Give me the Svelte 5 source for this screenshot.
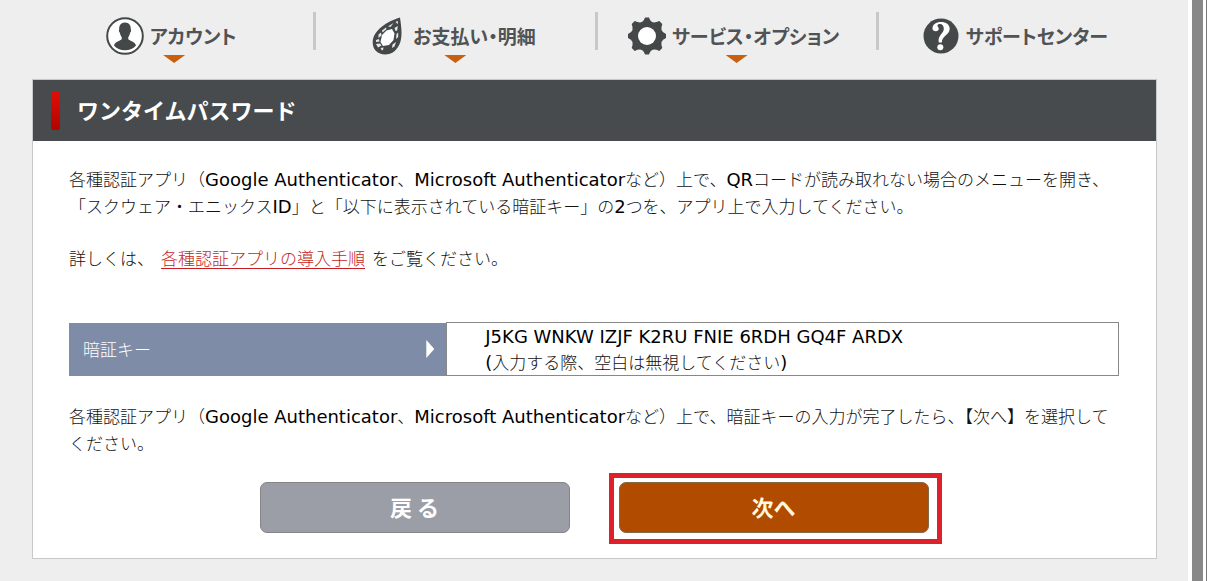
<script>
  const authApps = ['Google Authenticator', 'Microsoft Authenticator'];
  const passKey = 'J5KG WNKW IZJF K2RU FNIE 6RDH GQ4F ARDX';
  const menu = [
    { icon: 'account', label: 'アカウント', more: true },
    { icon: 'crystal', label: 'お支払い・明細', more: true },
    { icon: 'gear', label: 'サービス・オプション', more: true },
    { icon: 'help', label: 'サポートセンター', more: false }
  ];
</script>

<div class="window">
  <div class="page">
    <nav>
      {#each menu as item}
        <a href="#{item.icon}">
          <span class="entry">
            <svg class="icon" viewBox="0 0 38 38" aria-hidden="true">
              {#if item.icon === 'account'}
                <circle cx="19" cy="19" r="17.8" fill="#fff" stroke="#454849" stroke-width="2" />
                <path d="M19 5.5c4.2 0 6 3 5.800 7c.5.4.4 2.600-.7 3.300c-.3 2-1 3.300-1.800 4.100v2.300c1.200 1.700 6.900 2.100 7.700 6.300c-2.300 3.200-6.400 4.800-11 4.800s-8.700-1.600-11-4.800c.8-4.200 6.500-4.600 7.700-6.300v-2.300c-.8-.8-1.500-2.100-1.800-4.100c-1.100-.7-1.200-2.900-.7-3.300c-.2-4 1.600-7 5.800-7z" fill="#454849" />
              {:else if item.icon === 'crystal'}
                <path d="M31 .5c1.200 8.500 2.500 17 .5 24c-2.500 8.500-8.500 13-15.500 13S3.200 32.500 3.700 24.500C4.500 13 18 4.500 31 .5z" fill="#454849" />
                <path d="M17.500 13.500l5.500-1.500l2.500 4.500l-1 6.500l-4.500 5l-6 1l-2.500-4l1.500-7z" fill="#fff" />
                <path d="M13 13.500l4-3l.5 1.500l-4 3.500zM9.500 17.500l2.500-2l.5 3l-3 2.500zM7 23l3-1l.5 2.500l-3.500.5zM7 27l4-.5l1.500 2l-3.500 2zM11.500 31l3-.500l-.5 2.500l-1 .5zM19 9.500l5.500-3.500l-3 4zM26.500 5l2.300-1.200v3.500zM25.500 11l3.300-2l-.6 4.500l-1.700.5zM27.500 17l1.700-1.500v4.500l-2.200 2zM23.500 27.500l3.500-2.500l-1.500 4.500l-2.500 1.500z" fill="#e6e8e9" />
              {:else if item.icon === 'gear'}
                <path d="M17 .5h4q1.300 4 4 4.800q2.700.4 6.300-1.300l3 3q-1.300 3.500-.8 6q1 2.600 4.500 4v4q-3.500 1.400-4.500 4q-.5 2.500.8 6l-3 3q-3.600-1.700-6.300-1.300q-2.700.8-4 4.800h-4q-1.300-4-4-4.800q-2.700-.4-6.300 1.300l-3-3q1.300-3.500.8-6q-1-2.600-4.500-4v-4q3.500-1.400 4.500-4q.5-2.500-.8-6l3-3q3.600 1.700 6.300 1.300q2.700-.8 4-4.800z" fill="#454849" />
                <circle cx="19" cy="19" r="9" fill="#fff" />
              {:else}
                <circle cx="19" cy="19" r="17.500" fill="#454849" />
                <path d="M10.500 11.500c0-4.300 3.700-6.500 8.500-6.500c5 0 8.700 2.400 8.700 6.800c0 6-7.700 7-7.900 13.700h-3c-1.400-7.300 5-8.700 5-13.700c0-3-1.500-4.900-3.900-4.900c-1.400 0-2.500.6-2.500 1.500c0 1 1.400 1.700 1.400 3.400c0 1.600-1.300 2.500-2.900 2.500c-2 0-3.400-1-3.400-2.800z" fill="#fff" />
                <circle cx="18.300" cy="30.300" r="3" fill="#fff" />
              {/if}
            </svg>
            <span class="label">{item.label}</span>
          </span>
          {#if item.more}<span class="arrow"></span>{/if}
        </a>
      {/each}
    </nav>

    <main>
      <h1><span>ワンタイムパスワード</span></h1>
      <div class="body">
        <p>
          各種認証アプリ（<b>{authApps[0]}</b>、<b>{authApps[1]}</b>など）上で、<b>QR</b>コードが読み取れない場合のメニューを開き、<br />「スクウェア・エニックス<b>ID</b>」と「以下に表示されている暗証キー」の<b>2</b>つを、アプリ上で入力してください。
        </p>
        <p class="guide">詳しくは、<a href="#guide">各種認証アプリの導入手順</a>をご覧ください。</p>
        <table>
          <tbody>
            <tr>
              <th scope="row"><div class="key">暗証キー<span class="pointer"></span></div></th>
              <td><b>{passKey}</b><br /><b>(</b>入力する際、空白は無視してください<b>)</b></td>
            </tr>
          </tbody>
        </table>
        <p>
          各種認証アプリ（<b>{authApps[0]}</b>、<b>{authApps[1]}</b>など）上で、暗証キーの入力が完了したら、【次へ】を選択して<br />ください。
        </p>
        <div class="actions">
          <button type="button">戻 る</button>
          <div class="highlight"><button type="button" class="next">次へ</button></div>
        </div>
      </div>
    </main>
  </div>
  <div class="rail"></div>
</div>

<style>
  :global(body) {
    margin: 0;
    background: #eee;
  }
  .window {
    display: flex;
    min-height: 100vh;
    border-right: 1px solid #777;
    box-sizing: border-box;
    font-family: "Noto Sans CJK JP", sans-serif;
    color: #111;
  }
  .page {
    flex: 1;
    min-width: 0;
    padding: 0 31px 22px 32px;
    background: #eee;
  }
  .rail {
    width: 11px;
    border: solid #fff;
    border-width: 0 3px 0 4px;
    background: #888;
  }
  nav {
    display: grid;
    grid-template-columns: repeat(4, 1fr);
    padding: 12px 0 10px;
  }
  nav a {
    display: flex;
    flex-direction: column;
    align-items: center;
    height: 57px;
    color: #505355;
    text-decoration: none;
    background: linear-gradient(#c8c8c8, #c8c8c8) left top / 3px 38px no-repeat;
  }
  nav a:first-child {
    background: none;
  }
  .entry {
    display: flex;
    align-items: center;
    gap: 6px;
    height: 38px;
    padding: 5px 3px 0 0;
  }
  .icon {
    width: 38px;
    height: 38px;
  }
  .label {
    font: bold 19px/38px "Noto Sans CJK JP", sans-serif;
    font-feature-settings: "palt";
    white-space: nowrap;
  }
  .arrow {
    width: 22px;
    height: 8px;
    margin-left: 3px;
    background: #c8600f;
    clip-path: polygon(0 0, 100% 0, 50% 100%);
  }
  main {
    border: 1px solid #c8c8c8;
    background: #fff;
  }
  h1 {
    display: flex;
    align-items: center;
    gap: 17px;
    height: 61px;
    margin: 0;
    padding-left: 18px;
    background: #474b4e;
    color: #fff;
    font: bold 22px/36px "Noto Sans CJK JP", sans-serif;
  }
  h1 span {
    padding-bottom: 4px;
  }
  h1::before {
    content: "";
    width: 9px;
    height: 38px;
    border-radius: 2px;
    background: linear-gradient(#e20d08, #b00500);
  }
  .body {
    padding: 24px 37px 14px 36px;
    font-size: 17px;
    line-height: 27px;
    font-weight: 300;
  }
  b {
    font-family: "DejaVu Sans", sans-serif;
    font-size: 18px;
    font-weight: 400;
    line-height: 1;
    color: #000;
  }
  p {
    margin: 0;
  }
  .guide {
    margin: 25px 0 51px;
  }
  .guide a {
    margin: 0 7px;
    color: #c61d22;
    text-underline-offset: 3px;
  }
  table {
    width: 100%;
    margin-bottom: 26px;
    border-collapse: collapse;
    line-height: 26px;
  }
  th {
    width: 36%;
    padding: 0 12px 0 14px;
    background: #7f8ca8;
    color: #fff;
    font-weight: 300;
    text-align: left;
  }
  .key {
    display: flex;
    justify-content: space-between;
    align-items: center;
  }
  .pointer {
    width: 8px;
    height: 18px;
    background: #fff;
    clip-path: polygon(0 0, 100% 50%, 0 100%);
  }
  td {
    padding: 0 38px;
    border: 1px solid #888;
  }
  .actions {
    display: flex;
    justify-content: center;
    align-items: baseline;
    gap: 39px;
    margin-top: 17px;
    padding-left: 13px;
  }
  button {
    width: 310px;
    height: 51px;
    padding: 0 0 4px;
    border: 1px solid #858585;
    border-radius: 7px;
    background: #9b9ea7;
    color: #fff;
    font: bold 22px/36px "Noto Sans CJK JP", sans-serif;
  }
  .next {
    display: block;
    border-color: #816849;
    background: #b04b00;
    color: #fff8dc;
  }
  .highlight {
    padding: 4px 8px 6px 5px;
    border: 5px solid #de202b;
  }
</style>
